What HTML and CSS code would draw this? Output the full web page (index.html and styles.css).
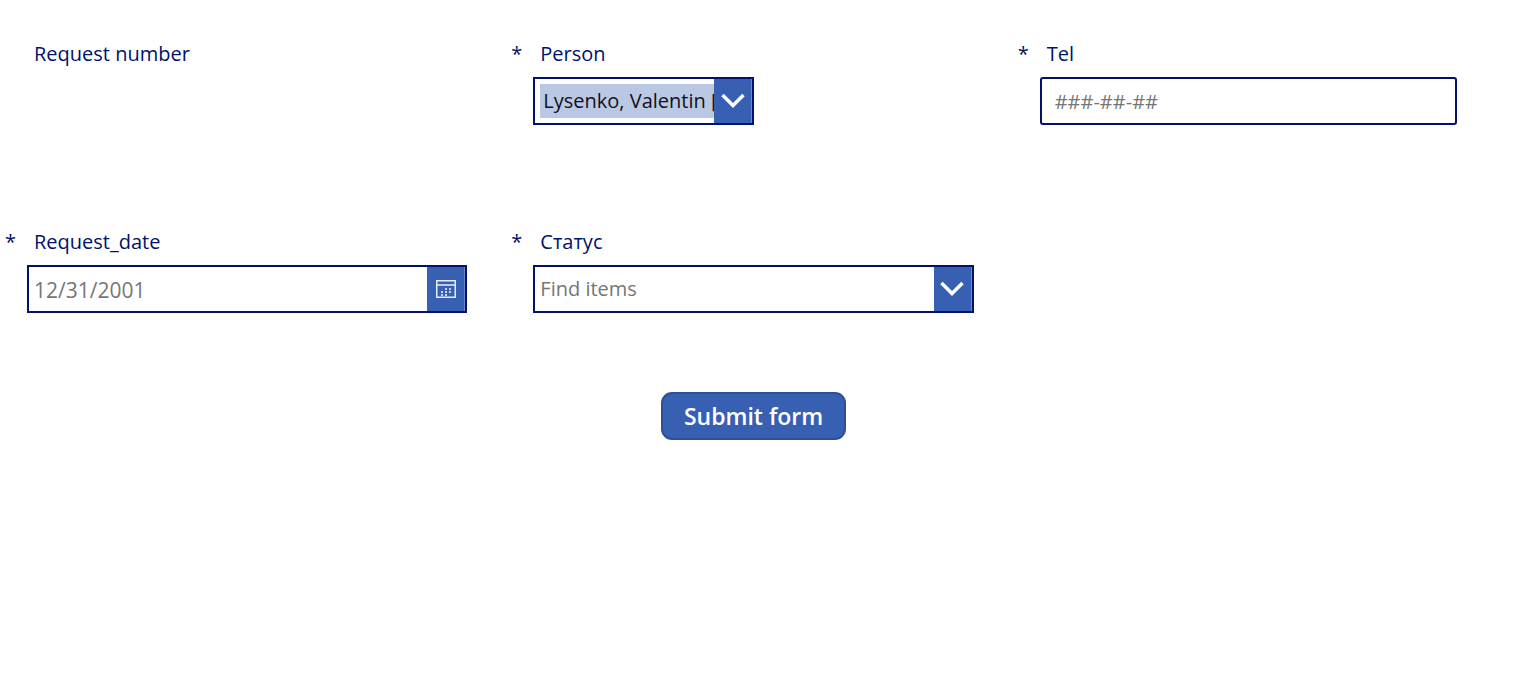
FILE: index.html
```html
<!DOCTYPE html>
<html lang="en">
<head>
<meta charset="utf-8">
<meta name="viewport" content="width=device-width, initial-scale=1">
<title>Request form</title>
<link rel="stylesheet" href="styles.css">
</head>
<body>
<form class="form">
  <div class="fields">
    <div class="field">
      <span class="label">Request number</span>
    </div>
    <div class="field">
      <span class="required">*</span>
      <label class="label" for="person">Person</label>
      <div class="control control-short">
        <input class="input input-selected" id="person" type="text" role="combobox" aria-expanded="false" value="Lysenko, Valentin [">
        <button class="toggle" type="button" aria-label="Open person list">
          <svg class="chevron" viewBox="0 0 24 16" aria-hidden="true"><path d="M1.5 2 12 12.5 22.5 2"/></svg>
        </button>
      </div>
    </div>
    <div class="field field-last">
      <span class="required">*</span>
      <label class="label" for="tel">Tel</label>
      <div class="control control-rounded">
        <input class="input input-tel" id="tel" type="tel" placeholder="###-##-##">
      </div>
    </div>
    <div class="field">
      <span class="required">*</span>
      <label class="label" for="date">Request_date</label>
      <div class="control">
        <input class="input input-date" id="date" type="text" placeholder="12/31/2001">
        <button class="toggle" type="button" aria-label="Open calendar">
          <svg class="calendar" viewBox="0 0 20 18" aria-hidden="true">
            <path class="calendar-frame" d="M.75.75h18.5v16.5H.75zM.75 5h18.5"/>
            <path class="calendar-days" d="M9 8h2v2H9zM13 8h2v2h-2zM5 11h2v2H5zM9 11h2v2H9zM13 11h2v2h-2zM5 14h2v2H5zM9 14h2v2H9z"/>
          </svg>
        </button>
      </div>
    </div>
    <div class="field">
      <span class="required">*</span>
      <label class="label" for="status">Статус</label>
      <div class="control">
        <input class="input" id="status" type="text" role="combobox" aria-expanded="false" placeholder="Find items">
        <button class="toggle" type="button" aria-label="Open status list">
          <svg class="chevron" viewBox="0 0 24 16" aria-hidden="true"><path d="M1.5 2 12 12.5 22.5 2"/></svg>
        </button>
      </div>
    </div>
  </div>
  <button class="submit" type="submit">Submit form</button>
</form>
</body>
</html>
```
FILE: styles.css
```css
* {
  box-sizing: border-box;
}

body {
  margin: 0;
  background: #fff;
  color: #00126b;
  font-family: "Open Sans", "Noto Sans", sans-serif;
  font-size: 20px;
  line-height: 28px;
}

.form {
  display: flex;
  flex-direction: column;
  padding-top: 40px;
}

.fields {
  display: grid;
  grid-template-columns: repeat(3, 1fr);
  row-gap: 103px;
  padding-right: 2px;
}

.field {
  display: grid;
  grid-template-columns: 27px 1fr;
  align-content: start;
  row-gap: 9px;
  min-height: 76px;
  padding-right: 39px;
}

.field-last {
  padding-right: 62px;
}

.required {
  grid-column: 1;
  padding-left: 5px;
}

.label {
  grid-column: 2;
  padding-left: 7px;
}

.control {
  grid-column: 2;
  display: flex;
  height: 48px;
  border: 2px solid #00126b;
  background: #fff;
}

.control-short {
  width: 50%;
  min-width: 221px;
}

.control-rounded {
  border-radius: 3px;
}

.input {
  flex: 1;
  min-width: 0;
  padding: 0 5px;
  border: 0;
  outline: 0;
  background: transparent;
  color: #120f1e;
  font: inherit;
}

.input::placeholder {
  color: #767676;
  opacity: 1;
}

.input-selected {
  margin: 5px 0 5px 5px;
  padding: 0 0 0 3px;
  background: #bac9e3;
}

.input-tel {
  padding-top: 2px;
  padding-left: 13px;
}

.input-date {
  padding-top: 2px;
  font-size: 21px;
}

.toggle {
  display: flex;
  flex: none;
  align-items: center;
  justify-content: center;
  width: 38px;
  padding: 0;
  border: 0;
  border-right: 1px solid #6f87c4;
  background: #3860b2;
}

.chevron {
  width: 24px;
  height: 16px;
  fill: none;
  stroke: #fff;
  stroke-width: 3.5;
}

.calendar {
  width: 20px;
  height: 18px;
}

.calendar-frame {
  fill: none;
  stroke: #e3ebf8;
  stroke-width: 1.5;
}

.calendar-days {
  fill: #c6d5ee;
}

.submit {
  align-self: center;
  height: 48px;
  margin-top: 79px;
  margin-right: 14px;
  padding: 0 21px;
  border: 2px solid #2d4f96;
  border-radius: 11px;
  background: #3860b2;
  color: #fff;
  font: inherit;
  font-size: 23px;
  font-weight: 600;
}
```
